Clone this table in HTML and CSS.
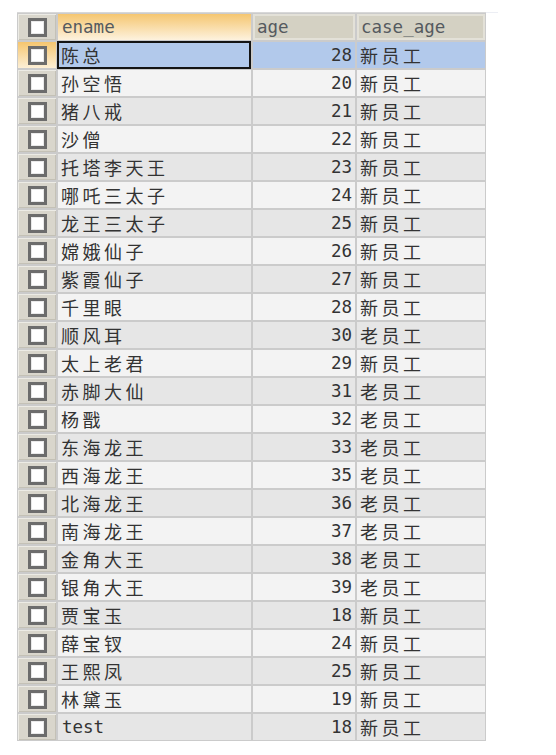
FILE: index.html
```html
<!DOCTYPE html>
<html>
<head>
<meta charset="utf-8">
<link rel="stylesheet" href="styles.css">
</head>
<body>
<div class="frame">
  <div class="grid">
    <div class="row head">
      <div class="cb"><span class="box"></span></div>
      <div class="hd hd-sel">ename</div>
      <div class="hd">age</div>
      <div class="hd">case_age</div>
    </div>
    <div class="row sel">
      <div class="cb cb-sel"><span class="box"></span></div>
      <div class="c name cur">陈总</div>
      <div class="c num">28</div>
      <div class="c cs">新员工</div>
    </div>
    <div class="row lt"><div class="cb"><span class="box"></span></div><div class="c name">孙空悟</div><div class="c num">20</div><div class="c cs">新员工</div></div>
    <div class="row dk"><div class="cb"><span class="box"></span></div><div class="c name">猪八戒</div><div class="c num">21</div><div class="c cs">新员工</div></div>
    <div class="row lt"><div class="cb"><span class="box"></span></div><div class="c name">沙僧</div><div class="c num">22</div><div class="c cs">新员工</div></div>
    <div class="row dk"><div class="cb"><span class="box"></span></div><div class="c name">托塔李天王</div><div class="c num">23</div><div class="c cs">新员工</div></div>
    <div class="row lt"><div class="cb"><span class="box"></span></div><div class="c name">哪吒三太子</div><div class="c num">24</div><div class="c cs">新员工</div></div>
    <div class="row dk"><div class="cb"><span class="box"></span></div><div class="c name">龙王三太子</div><div class="c num">25</div><div class="c cs">新员工</div></div>
    <div class="row lt"><div class="cb"><span class="box"></span></div><div class="c name">嫦娥仙子</div><div class="c num">26</div><div class="c cs">新员工</div></div>
    <div class="row dk"><div class="cb"><span class="box"></span></div><div class="c name">紫霞仙子</div><div class="c num">27</div><div class="c cs">新员工</div></div>
    <div class="row lt"><div class="cb"><span class="box"></span></div><div class="c name">千里眼</div><div class="c num">28</div><div class="c cs">新员工</div></div>
    <div class="row dk"><div class="cb"><span class="box"></span></div><div class="c name">顺风耳</div><div class="c num">30</div><div class="c cs">老员工</div></div>
    <div class="row lt"><div class="cb"><span class="box"></span></div><div class="c name">太上老君</div><div class="c num">29</div><div class="c cs">新员工</div></div>
    <div class="row dk"><div class="cb"><span class="box"></span></div><div class="c name">赤脚大仙</div><div class="c num">31</div><div class="c cs">老员工</div></div>
    <div class="row lt"><div class="cb"><span class="box"></span></div><div class="c name">杨戬</div><div class="c num">32</div><div class="c cs">老员工</div></div>
    <div class="row dk"><div class="cb"><span class="box"></span></div><div class="c name">东海龙王</div><div class="c num">33</div><div class="c cs">老员工</div></div>
    <div class="row lt"><div class="cb"><span class="box"></span></div><div class="c name">西海龙王</div><div class="c num">35</div><div class="c cs">老员工</div></div>
    <div class="row dk"><div class="cb"><span class="box"></span></div><div class="c name">北海龙王</div><div class="c num">36</div><div class="c cs">老员工</div></div>
    <div class="row lt"><div class="cb"><span class="box"></span></div><div class="c name">南海龙王</div><div class="c num">37</div><div class="c cs">老员工</div></div>
    <div class="row dk"><div class="cb"><span class="box"></span></div><div class="c name">金角大王</div><div class="c num">38</div><div class="c cs">老员工</div></div>
    <div class="row lt"><div class="cb"><span class="box"></span></div><div class="c name">银角大王</div><div class="c num">39</div><div class="c cs">老员工</div></div>
    <div class="row dk"><div class="cb"><span class="box"></span></div><div class="c name">贾宝玉</div><div class="c num">18</div><div class="c cs">新员工</div></div>
    <div class="row lt"><div class="cb"><span class="box"></span></div><div class="c name">薛宝钗</div><div class="c num">24</div><div class="c cs">新员工</div></div>
    <div class="row dk"><div class="cb"><span class="box"></span></div><div class="c name">王熙凤</div><div class="c num">25</div><div class="c cs">新员工</div></div>
    <div class="row lt"><div class="cb"><span class="box"></span></div><div class="c name">林黛玉</div><div class="c num">19</div><div class="c cs">新员工</div></div>
    <div class="row dk"><div class="cb"><span class="box"></span></div><div class="c name mono">test</div><div class="c num">18</div><div class="c cs">新员工</div></div>
  </div>
</div>
</body>
</html>
```
FILE: styles.css
```css
html, body {
  margin: 0;
  padding: 0;
  background: #ffffff;
}
body {
  font-family: "DejaVu Sans Mono", "Noto Sans CJK SC", monospace;
  color: #2e2e2e;
}
.frame {
  padding: 12px 0 0 17px;
}
.grid {
  width: 469px;
  display: grid;
  grid-template-columns: 38px 193px 102px 128px;
  grid-auto-rows: 26px;
  gap: 2px;
  padding: 1px;
  background: #cbcbcb;
  border-top: 1px solid #d8d8d8;
  box-sizing: border-box;
  position: relative;
}
.grid::before {
  content: "";
  position: absolute;
  top: -1px;
  left: 469px;
  width: 12px;
  height: 1px;
  background: #eceef4;
}
.row {
  display: contents;
}
.cb {
  display: flex;
  align-items: center;
  justify-content: center;
  background: #d9d6cc;
  box-shadow: inset 1px 1px 0 #ecebe5, inset -1px -1px 0 #c4c1b6;
}
.cb-sel {
  background: linear-gradient(#f6c66f, #fcefd6);
  box-shadow: none;
}
.box {
  width: 13px;
  height: 13px;
  border: 3px solid #6c6c6c;
  background: #ffffff;
  box-shadow: inset 0 0 0 1px #e9e9e9;
}
.hd {
  display: flex;
  align-items: center;
  padding-left: 4px;
  font-size: 17.5px;
  color: #555a5f;
  background: #d4d1c3;
  box-shadow: inset 2px 2px 0 #e3e1d8, inset -2px -2px 0 #e3e1d8;
}
.hd-sel {
  background: linear-gradient(#f5c670, #fdf2de);
  box-shadow: none;
}
.c {
  display: flex;
  align-items: center;
  font-size: 18px;
  color: #333333;
}
.name, .cs {
  padding-left: 3px;
  letter-spacing: 3.5px;
  font-family: "Noto Sans CJK SC", sans-serif;
}
.name.mono {
  font-family: "DejaVu Sans Mono", monospace;
  font-size: 17.5px;
  letter-spacing: 0;
  padding-left: 4px;
}
.num {
  justify-content: flex-end;
  padding-right: 3px;
  font-size: 17.5px;
  font-family: "DejaVu Sans Mono", monospace;
}
.lt > .c { background: #f3f3f3; }
.dk > .c { background: #e6e6e6; }
.sel > .c { background: #b2c9eb; }
.sel > .cur {
  box-shadow: inset 0 0 0 2px #141414;
  margin: -1px 0 -1px -1px;
  padding-left: 4px;
}
```
